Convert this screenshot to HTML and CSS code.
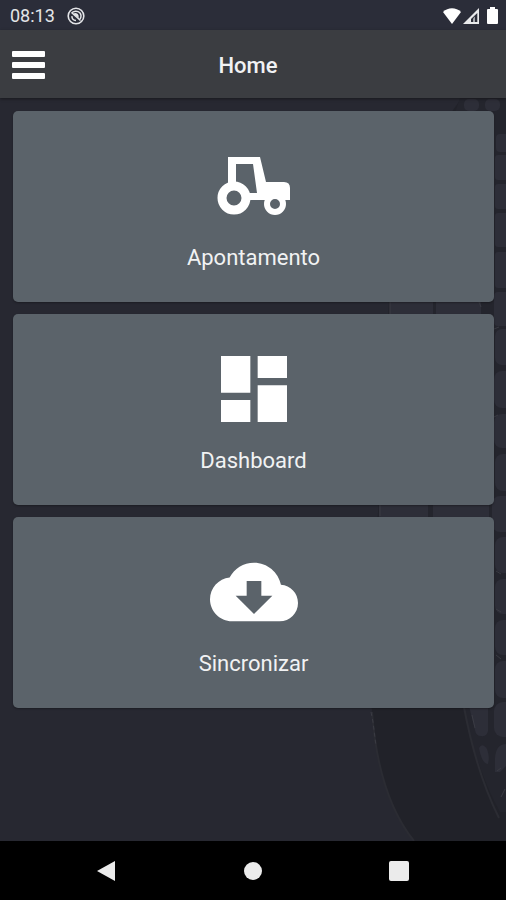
FILE: index.html
```html
<!DOCTYPE html>
<html lang="pt-BR">
<head>
  <meta charset="UTF-8" />
  <meta name="viewport" content="width=device-width, initial-scale=1.0"/>
  <title>Home</title>
  <link rel="stylesheet" href="styles.css">
</head>
<body>
  <div class="status-bar">
    <span class="clock">08:13</span>
    <svg class="status-app" viewBox="0 0 18 18" aria-hidden="true">
      <circle cx="9" cy="9" r="7.8" fill="none" stroke="#e4e5e8" stroke-width="1.6"/>
      <path d="M4.5 6.2C6.5 3.8 10.500 3.500 12.800 5.800 14.300 7.500 14.200 10 13.200 12M5 9.200C4.600 11.500 6.500 13.500 9 13.400M4.500 5.500l9 8" fill="none" stroke="#e4e5e8" stroke-width="1.5"/>
      <path d="M6 7c2-2 5-1 5.500 1.500l.3 2.500z" fill="#e4e5e8"/>
    </svg>
    <div class="status-icons">
      <svg class="wifi" viewBox="0 0 18 16" aria-hidden="true">
        <path d="M0 4C5-1 13-1 18 4L9 16z" fill="#fff"/>
      </svg>
      <svg class="signal" viewBox="0 0 16 16" aria-hidden="true">
        <path d="M16 0V16H0z" fill="#e9eaec"/>
        <path d="M14.300 5V14H8V11z" fill="#2b2d39"/>
        <path d="M10 10.500l2-2V14h-2z" fill="#a5a7ac"/>
      </svg>
      <svg class="battery" viewBox="0 0 11 17" aria-hidden="true">
        <path d="M3 0h5v2h2q1 0 1 1v13q0 1-1 1H1q-1 0-1-1V3q0-1 1-1h2z" fill="#fff"/>
      </svg>
    </div>
  </div>

  <header class="app-header">
    <button class="menu-button" type="button" aria-label="Menu">
      <span></span>
      <span></span>
      <span></span>
    </button>
    <h1>Home</h1>
  </header>

  <main>
    <!-- tyre in the background -->
    <svg class="tyre" viewBox="360 98 146 743" preserveAspectRatio="xMaxYMin slice" aria-hidden="true">
      <path d="M506 98H462C420 150 396 230 389 302L379 504C371 570 369 660 372 712C376 765 389 810 414 841H506z" fill="#212229"/>
      <path d="M460 98H506V812H500C482 780 468 735 461 700L378 520L389 302z" fill="#24252d"/>
      <g fill="#2d2e38">
        <path d="M390 302h43v12h-43zM436 302h45v12h-45zM379 504h49v13h-49zM433 504h56v13h-56z"/>
        <rect x="464" y="99" width="15" height="12" rx="5"/>
        <rect x="485" y="99" width="15" height="12" rx="5"/>
        <rect x="496" y="134" width="16" height="18" rx="4"/>
        <rect x="495" y="155" width="16" height="25" rx="3"/>
        <rect x="495" y="184" width="16" height="25" rx="3"/>
        <rect x="495" y="213" width="16" height="34" rx="3"/>
        <rect x="495" y="252" width="16" height="36" rx="3"/>
        <rect x="494" y="292" width="18" height="34" rx="4"/>
        <rect x="495" y="329" width="20" height="36" rx="7"/>
        <rect x="494" y="371" width="22" height="37" rx="8"/>
        <rect x="494" y="414" width="22" height="34" rx="8"/>
        <rect x="495" y="454" width="22" height="37" rx="8"/>
        <rect x="492" y="496" width="22" height="36" rx="8"/>
        <rect x="495" y="537" width="22" height="36" rx="8"/>
        <rect x="495" y="579" width="22" height="35" rx="8"/>
        <rect x="495" y="620" width="22" height="35" rx="8"/>
        <rect x="495" y="661" width="22" height="37" rx="8"/>
        <path d="M469 706H488V731Q487 737 481 736Q476 736 475 730z"/>
        <rect x="494" y="702" width="22" height="35" rx="9"/>
        <path d="M479 748Q482 742 487 749Q490 757 488 764Q482 764 479 748z"/>
        <path d="M495 772V758Q496 744 506 744V766L500 772z"/>
      </g>
      <g fill="none" stroke="#3a3b43">
        <path d="M390 302v12M380 504v12M496 571l5 3M496 609l5 3M496 655l5 4M494 417l4-2M494 329l5-2M479 302l2 5"/>
        <path d="M372 712C376 765 389 810 414 841M464 707C472 750 485 790 499 818" stroke="#2b2c33" stroke-width="2"/>
        <path d="M371 712l2 10 3 24" stroke-dasharray="4 3"/>
        <path d="M472 715l3 13M497 771l4-3M501 797l4-8"/>
      </g>
    </svg>

    <nav class="cards">
      <button class="card" type="button">
        <svg viewBox="0 0 88 88" aria-hidden="true">
          <path fill="#fff" d="M18 15H50L56 40H74Q80 40 80 46V58H36V51H47L43 22H26V45H18z"/>
          <circle cx="24" cy="56" r="12" fill="#5b636a" stroke="#fff" stroke-width="9"/>
          <circle cx="65" cy="62" r="8" fill="#5b636a" stroke="#fff" stroke-width="6"/>
        </svg>
        <span>Apontamento</span>
      </button>
      <button class="card" type="button">
        <svg viewBox="0 0 24 24" aria-hidden="true">
          <path fill="#fff" d="M3 13h8V3H3v10zm0 8h8v-6H3v6zm10 0h8V11h-8v10zm0-18v6h8V3h-8z"/>
        </svg>
        <span>Dashboard</span>
      </button>
      <button class="card" type="button">
        <svg viewBox="0 0 24 24" aria-hidden="true">
          <path fill="#fff" d="M19.350 10.040C18.670 6.590 15.640 4 12 4 9.110 4 6.600 5.640 5.350 8.040 2.340 8.360 0 10.910 0 14c0 3.310 2.690 6 6 6h13c2.760 0 5-2.240 5-5 0-2.640-2.050-4.780-4.650-4.960zM17 13l-5 5-5-5h3V9h4v4h3z"/>
        </svg>
        <span>Sincronizar</span>
      </button>
    </nav>
  </main>

  <footer class="system-nav">
    <button type="button" aria-label="Voltar">
      <svg viewBox="0 0 22 22" aria-hidden="true"><path d="M1 11L19 1V21z" fill="#ebebeb"/></svg>
    </button>
    <button type="button" aria-label="Início">
      <svg viewBox="0 0 22 22" aria-hidden="true"><circle cx="11" cy="11" r="9" fill="#ebebeb"/></svg>
    </button>
    <button type="button" aria-label="Recentes">
      <svg viewBox="0 0 22 22" aria-hidden="true"><rect x="1" y="1" width="20" height="20" rx="2" fill="#ebebeb"/></svg>
    </button>
  </footer>
</body>
</html>
```
FILE: styles.css
```css
* {
  box-sizing: border-box;
}

body {
  font-family: Roboto, "Liberation Sans", sans-serif;
  background-color: #272831;
  color: #f1f2f3;
  margin: 0;
  display: flex;
  flex-direction: column;
  min-height: 100vh;
}

button {
  font-family: inherit;
  color: inherit;
  border: none;
  padding: 0;
  background: none;
  cursor: pointer;
}

svg {
  display: block;
}

.status-bar {
  display: flex;
  align-items: center;
  height: 30px;
  padding: 1px 8px 0 10px;
  background-color: #2b2d39;
}

.clock {
  font-size: 18px;
  line-height: 20px;
  color: #e4e5e8;
}

.status-app {
  width: 18px;
  height: 18px;
  margin-left: 12px;
}

.status-icons {
  display: flex;
  align-items: center;
  margin-left: auto;
}

.wifi {
  width: 18px;
  height: 16px;
}

.signal {
  width: 16px;
  height: 16px;
  margin-left: 2px;
}

.battery {
  width: 11px;
  height: 17px;
  margin-left: 8px;
}

.app-header {
  display: grid;
  grid-template-columns: 1fr auto 1fr;
  align-items: center;
  height: 68px;
  padding: 2px 22px 0 12px;
  background-color: #3b3d41;
  box-shadow: 0 1px 3px rgba(0,0,0,0.4);
  z-index: 1;
}

.app-header h1 {
  margin: 0;
  padding-top: 2px;
  font-size: 22px;
  line-height: 26px;
  font-weight: 500;
}

.menu-button {
  display: flex;
  flex-direction: column;
  gap: 5px;
  width: 33px;
}

.menu-button span {
  height: 6px;
  border-radius: 1px;
  background-color: #fff;
}

main {
  position: relative;
  flex: 1;
  padding: 13px 12px 13px 13px;
}

.tyre {
  position: absolute;
  top: 0;
  right: 0;
  width: 146px;
  height: 100%;
}

.cards {
  position: relative;
  display: flex;
  flex-direction: column;
  gap: 12px;
}

.card {
  display: flex;
  flex-direction: column;
  align-items: center;
  gap: 14px;
  padding: 31px 16px;
  border-radius: 5px;
  background-color: #5b636a;
  font-size: 22px;
  line-height: 27px;
  box-shadow: 0 1px 2px rgba(0,0,0,0.3);
}

.card svg {
  width: 88px;
  height: 88px;
}

.system-nav {
  display: flex;
  justify-content: center;
  gap: 124px;
  padding: 19px 0 18px;
  background-color: #000;
}

.system-nav svg {
  width: 22px;
  height: 22px;
}
```
